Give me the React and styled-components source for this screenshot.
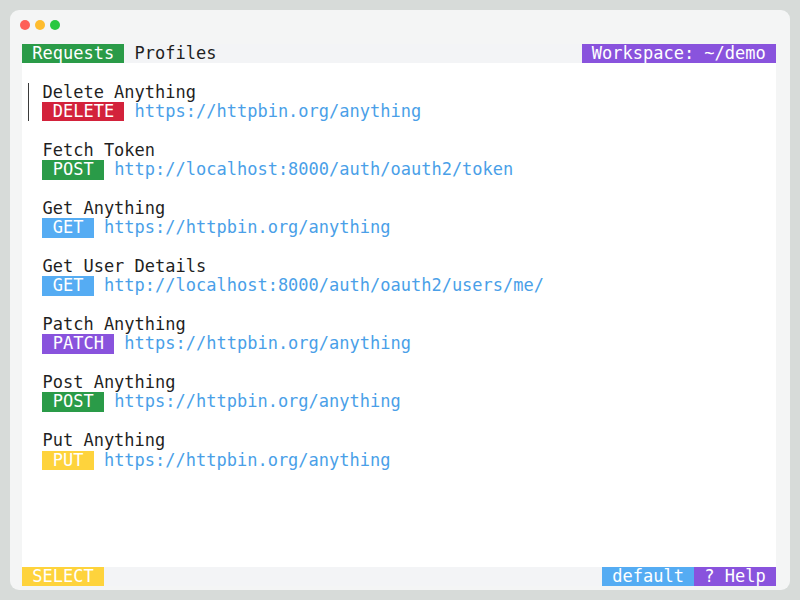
import React from "react";
import styled, { createGlobalStyle } from "styled-components";

const ROW = "19.36px";

const GlobalStyle = createGlobalStyle`
    html, body {
        margin: 0;
        padding: 0;
        background: #d7dbd9;
    }
    body {
        font-family: "DejaVu Sans Mono", "Liberation Mono", monospace;
    }
`;

const COLORS = {
    DELETE: "#d3223b",
    POST: "#2a9b48",
    GET: "#55acf3",
    PATCH: "#8953dd",
    PUT: "#fed33c",
};

const requests = [
    { name: "Delete Anything", method: "DELETE", url: "https://httpbin.org/anything", selected: true },
    { name: "Fetch Token", method: "POST", url: "http://localhost:8000/auth/oauth2/token" },
    { name: "Get Anything", method: "GET", url: "https://httpbin.org/anything" },
    { name: "Get User Details", method: "GET", url: "http://localhost:8000/auth/oauth2/users/me/" },
    { name: "Patch Anything", method: "PATCH", url: "https://httpbin.org/anything" },
    { name: "Post Anything", method: "POST", url: "https://httpbin.org/anything" },
    { name: "Put Anything", method: "PUT", url: "https://httpbin.org/anything" },
];

function App() {
    return (
        <>
            <GlobalStyle />
            <Page>
                <Window>
                    <TitleBar>
                        <Dot color="#fe5f57" />
                        <Dot color="#febc2e" />
                        <Dot color="#28c840" />
                    </TitleBar>
                    <Screen>
                        <TopBar>
                            <Tab active>Requests</Tab>
                            <Tab>Profiles</Tab>
                            <Spacer />
                            <Block bg="#8953dd">Workspace: ~/demo</Block>
                        </TopBar>
                        <List>
                            {requests.map((r) => (
                                <Item key={r.name}>
                                    <Gutter>{r.selected && <SelectBar />}</Gutter>
                                    <Body>
                                        <Line>{r.name}</Line>
                                        <Line>
                                            <Badge bg={COLORS[r.method]}>{r.method}</Badge>
                                            <Url>{r.url}</Url>
                                        </Line>
                                    </Body>
                                </Item>
                            ))}
                        </List>
                        <BottomBar>
                            <Block bg="#fed33c">SELECT</Block>
                            <Spacer />
                            <Block bg="#55acf3">default</Block>
                            <Block bg="#8953dd">? Help</Block>
                        </BottomBar>
                    </Screen>
                </Window>
            </Page>
        </>
    );
}

export default App;

const Page = styled.div`
    width: 800px;
    height: 600px;
    padding: 10px;
    box-sizing: border-box;
`;

const Window = styled.div`
    width: 780px;
    height: 580px;
    background: #f4f5f5;
    border-radius: 9px;
    padding: 0 14px 4px 12px;
    box-sizing: border-box;
    display: flex;
    flex-direction: column;
`;

const TitleBar = styled.div`
    height: 34px;
    box-sizing: border-box;
    display: flex;
    align-items: flex-start;
    gap: 5px;
    padding-top: 10px;
    margin-left: -2px;
    flex-shrink: 0;
`;

const Dot = styled.span`
    width: 10px;
    height: 10px;
    border-radius: 50%;
    background: ${(p) => p.color};
`;

const Screen = styled.div`
    flex: 1;
    background: #ffffff;
    display: flex;
    flex-direction: column;
    font-size: 17px;
    color: #1f1f1f;
    white-space: pre;
`;

const Bar = styled.div`
    height: ${ROW};
    line-height: ${ROW};
    display: flex;
    background: #f3f4f6;
    flex-shrink: 0;
`;

const TopBar = styled(Bar)``;

const BottomBar = styled(Bar)`
    margin-top: auto;
`;

const Tab = styled.span`
    padding: 0 1ch;
    background: ${(p) => (p.active ? "#2a9b48" : "transparent")};
    color: ${(p) => (p.active ? "#ffffff" : "#1f1f1f")};
`;

const Block = styled.span`
    padding: 0 1ch;
    background: ${(p) => p.bg};
    color: #ffffff;
`;

const Spacer = styled.span`
    flex: 1;
`;

const List = styled.div`
    display: flex;
    flex-direction: column;
    padding-top: ${ROW};
    gap: ${ROW};
`;

const Item = styled.div`
    display: flex;
`;

const Gutter = styled.div`
    width: 2ch;
    display: flex;
`;

const SelectBar = styled.span`
    width: 1px;
    margin-left: 6px;
    background: #3a3a3a;
`;

const Body = styled.div`
    display: flex;
    flex-direction: column;
`;

const Line = styled.div`
    height: ${ROW};
    line-height: ${ROW};
    display: flex;
`;

const Badge = styled.span`
    padding: 0 1ch;
    margin-right: 1ch;
    background: ${(p) => p.bg};
    color: #ffffff;
`;

const Url = styled.span`
    color: #4a9fe8;
`;
